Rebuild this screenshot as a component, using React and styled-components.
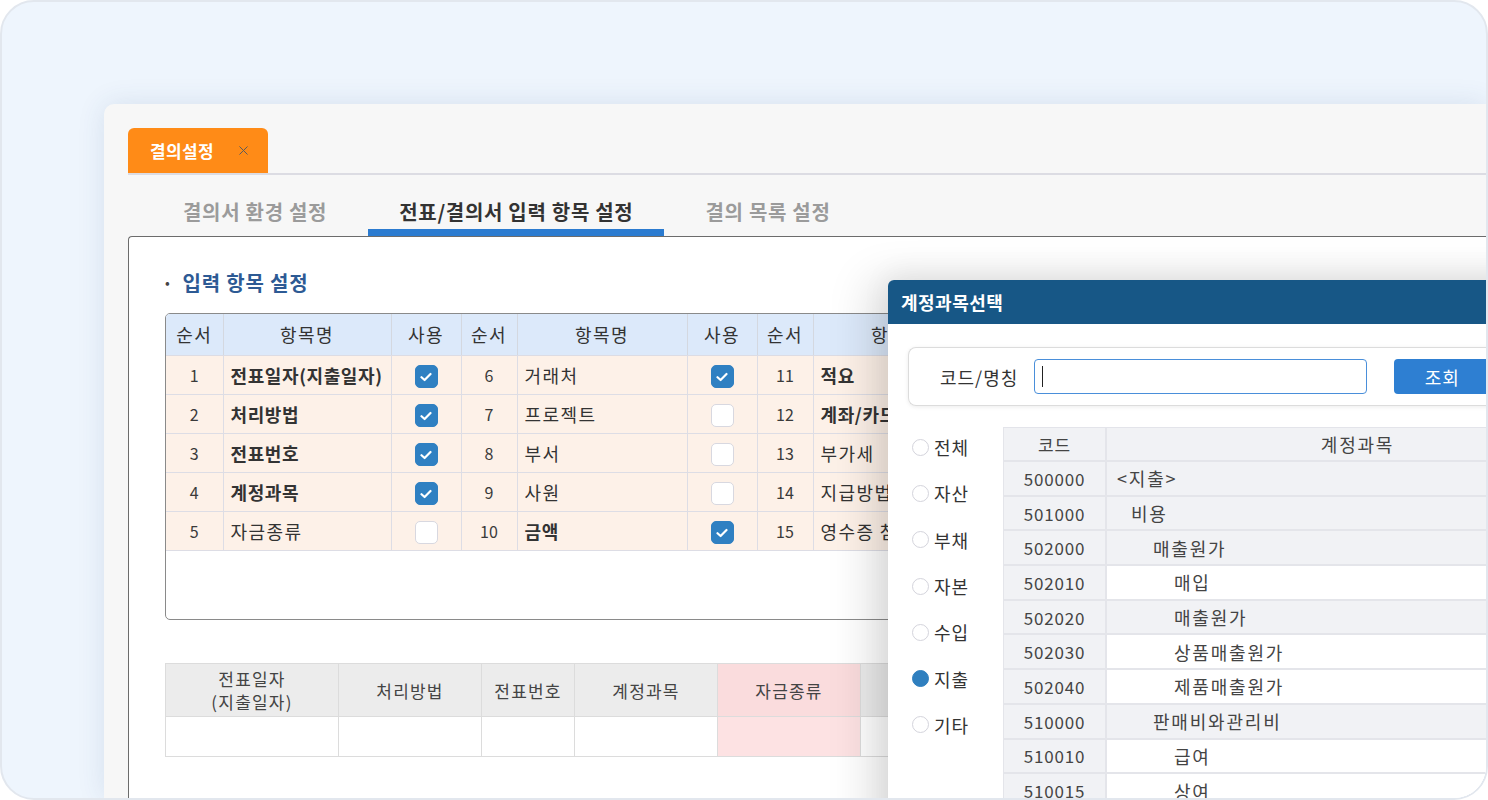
import React from "react";
import styled, { createGlobalStyle } from "styled-components";
import { X } from "lucide-react";

const GlobalStyle = createGlobalStyle`
  html, body {
    margin: 0;
    padding: 0;
    background: #ffffff;
  }
  body {
    font-family: "Noto Sans CJK KR", "Noto Sans", sans-serif;
    color: #333;
  }
  * {
    box-sizing: border-box;
  }
`;

const topItems = [
  [
    { no: 1, name: "전표일자(지출일자)", bold: true, on: true },
    { no: 2, name: "처리방법", bold: true, on: true },
    { no: 3, name: "전표번호", bold: true, on: true },
    { no: 4, name: "계정과목", bold: true, on: true },
    { no: 5, name: "자금종류", bold: false, on: false },
  ],
  [
    { no: 6, name: "거래처", bold: false, on: true },
    { no: 7, name: "프로젝트", bold: false, on: false },
    { no: 8, name: "부서", bold: false, on: false },
    { no: 9, name: "사원", bold: false, on: false },
    { no: 10, name: "금액", bold: true, on: true },
  ],
  [
    { no: 11, name: "적요", bold: true, on: true },
    { no: 12, name: "계좌/카드", bold: true, on: true },
    { no: 13, name: "부가세", bold: false, on: false },
    { no: 14, name: "지급방법", bold: false, on: false },
    { no: 15, name: "영수증 첨부", bold: false, on: false },
  ],
];

const bottomCols = [
  { label: ["전표일자", "(지출일자)"], w: 173 },
  { label: ["처리방법"], w: 143 },
  { label: ["전표번호"], w: 93 },
  { label: ["계정과목"], w: 143 },
  { label: ["자금종류"], w: 143, pink: true },
  { label: [""], w: 143 },
];

const radios = ["전체", "자산", "부채", "자본", "수입", "지출", "기타"];

// indent of the account name per tree level
const indents = [10, 24, 46, 67];

const accounts = [
  { code: "500000", name: "<지출>", level: 0, gray: true },
  { code: "501000", name: "비용", level: 1, gray: true },
  { code: "502000", name: "매출원가", level: 2, gray: true },
  { code: "502010", name: "매입", level: 3, gray: false },
  { code: "502020", name: "매출원가", level: 3, gray: true },
  { code: "502030", name: "상품매출원가", level: 3, gray: false },
  { code: "502040", name: "제품매출원가", level: 3, gray: false },
  { code: "510000", name: "판매비와관리비", level: 2, gray: true },
  { code: "510010", name: "급여", level: 3, gray: false },
  { code: "510015", name: "상여", level: 3, gray: false },
];

function CheckBox({ on }) {
  return (
    <Check $on={on}>
      {on && (
        <svg width="12" height="10" viewBox="0 0 12 10">
          <path
            d="M1.5 5.2 L4.6 8 L10.5 2"
            fill="none"
            stroke="#fff"
            strokeWidth="2.2"
            strokeLinecap="round"
            strokeLinejoin="round"
          />
        </svg>
      )}
    </Check>
  );
}

function App() {
  return (
    <>
      <GlobalStyle />
      <Frame>
        <AppWindow>
          <TabStrip>
            <OrangeTab>
              결의설정
              <X size={15} strokeWidth={1.6} color="#5b5b5b" />
            </OrangeTab>
          </TabStrip>

          <SubTabs>
            <SubTab>결의서 환경 설정</SubTab>
            <SubTab $active>전표/결의서 입력 항목 설정</SubTab>
            <SubTab>결의 목록 설정</SubTab>
          </SubTabs>

          <Panel>
            <SectionTitle>
              <Bullet>•</Bullet>
              입력 항목 설정
            </SectionTitle>

            <ItemBox>
              <ItemTable>
                <colgroup>
                  {[57, 168, 70, 56, 170, 70, 56, 170, 70].map((w, i) => (
                    <col key={i} style={{ width: w }} />
                  ))}
                </colgroup>
                <thead>
                  <tr>
                    {topItems.map((_, g) => (
                      <React.Fragment key={g}>
                        <HeadCell>순서</HeadCell>
                        <HeadCell>항목명</HeadCell>
                        <HeadCell>사용</HeadCell>
                      </React.Fragment>
                    ))}
                  </tr>
                </thead>
                <tbody>
                  {[0, 1, 2, 3, 4].map((r) => (
                    <tr key={r}>
                      {topItems.map((group, g) => {
                        const it = group[r];
                        return (
                          <React.Fragment key={g}>
                            <NumCell>{it.no}</NumCell>
                            <NameCell $bold={it.bold}>{it.name}</NameCell>
                            <UseCell>
                              <CheckBox on={it.on} />
                            </UseCell>
                          </React.Fragment>
                        );
                      })}
                    </tr>
                  ))}
                </tbody>
              </ItemTable>
            </ItemBox>

            <PreviewTable>
              <colgroup>
                {bottomCols.map((c, i) => (
                  <col key={i} style={{ width: c.w }} />
                ))}
              </colgroup>
              <thead>
                <tr>
                  {bottomCols.map((c, i) => (
                    <PreviewHead key={i} $pink={c.pink}>
                      {c.label.map((l, j) => (
                        <div key={j}>{l}</div>
                      ))}
                    </PreviewHead>
                  ))}
                </tr>
              </thead>
              <tbody>
                <tr>
                  {bottomCols.map((c, i) => (
                    <PreviewCell key={i} $pink={c.pink} />
                  ))}
                </tr>
              </tbody>
            </PreviewTable>
          </Panel>

          <Dialog>
            <DialogHeader>계정과목선택</DialogHeader>
            <DialogBody>
              <SearchBox>
                <SearchLabel>코드/명칭</SearchLabel>
                <SearchInput>
                  <Caret />
                </SearchInput>
                <SearchButton>조회</SearchButton>
              </SearchBox>

              <PickerRow>
                <RadioList>
                  {radios.map((r) => (
                    <RadioItem key={r}>
                      <RadioDot $on={r === "지출"} />
                      {r}
                    </RadioItem>
                  ))}
                </RadioList>

                <CodeTable>
                  <CodeRow $head>
                    <CodeCell $head>코드</CodeCell>
                    <AccountCell $head $gray>
                      계정과목
                    </AccountCell>
                  </CodeRow>
                  {accounts.map((a) => (
                    <CodeRow key={a.code}>
                      <CodeCell>{a.code}</CodeCell>
                      <AccountCell $gray={a.gray} $indent={indents[a.level]}>
                        {a.name}
                      </AccountCell>
                    </CodeRow>
                  ))}
                </CodeTable>
              </PickerRow>
            </DialogBody>
          </Dialog>
        </AppWindow>
      </Frame>
    </>
  );
}

export default App;

const Frame = styled.div`
  width: 1488px;
  height: 800px;
  border: 2px solid #e2e7ee;
  border-radius: 34px;
  background: #eef5fd;
  overflow: hidden;
  display: flex;
  padding: 102px 0 0 102px;
`;

const AppWindow = styled.div`
  position: relative;
  flex: 1;
  display: flex;
  flex-direction: column;
  background: #f7f7f7;
  border-top-left-radius: 10px;
  box-shadow: 0 0 28px rgba(40, 70, 120, 0.12);
  padding: 24px 0 0 24px;
`;

const TabStrip = styled.div`
  display: flex;
  height: 47px;
  border-bottom: 2px solid #dcdce3;
`;

const OrangeTab = styled.div`
  display: flex;
  align-items: center;
  gap: 22px;
  width: 140px;
  height: 45px;
  padding-left: 22px;
  background: #ff8b17;
  border-radius: 6px 6px 0 0;
  color: #fff;
  font-size: 17px;
  font-weight: 700;
  letter-spacing: 0.4px;
`;

const SubTabs = styled.div`
  display: flex;
  gap: 10px;
  padding: 20px 0 0 24px;
`;

const SubTab = styled.div`
  height: 41px;
  padding: 0 31px;
  line-height: 34px;
  font-size: 20px;
  font-weight: 700;
  letter-spacing: 0.7px;
  white-space: nowrap;
  color: ${(p) => (p.$active ? "#333" : "#9b9b9b")};
  border-bottom: 7px solid ${(p) => (p.$active ? "#2b7bd0" : "transparent")};
`;

const Panel = styled.div`
  flex: 1;
  background: #fff;
  border: 1px solid #6c6c6c;
  border-right: none;
  border-bottom: none;
  border-top-left-radius: 4px;
  padding: 29px 0 0 36px;
`;

const SectionTitle = styled.div`
  display: flex;
  align-items: center;
  gap: 12px;
  height: 32px;
  margin-bottom: 15px;
  font-size: 20px;
  font-weight: 700;
  letter-spacing: 0.8px;
  color: #2d5a94;
`;

const Bullet = styled.span`
  font-size: 14px;
  color: #444;
  font-weight: 400;
`;

const ItemBox = styled.div`
  width: 900px;
  height: 307px;
  border: 1px solid #8a8a8a;
  border-radius: 5px;
  overflow: hidden;
  background: #fff;
`;

const ItemTable = styled.table`
  border-collapse: collapse;
  table-layout: fixed;
  width: 887px;
  font-size: 18px;
  color: #333;
`;

const HeadCell = styled.th`
  height: 41px;
  padding: 0;
  background: #dce9fa;
  font-weight: 400;
  color: #333;
  letter-spacing: 1.4px;
  border-right: 1px solid #d4d8e0;
  border-bottom: 1px solid #dcdce4;
`;

const NumCell = styled.td`
  height: 39px;
  padding: 0;
  text-align: center;
  background: #fdf1e8;
  border: 1px solid #dddde5;
  border-left: none;
  font-size: 16px;
  color: #3a3a3a;
`;

const NameCell = styled.td`
  height: 39px;
  padding: 0 0 0 7px;
  background: #fdf1e8;
  border: 1px solid #dddde5;
  white-space: nowrap;
  overflow: hidden;
  font-weight: ${(p) => (p.$bold ? 700 : 400)};
  color: #333;
  letter-spacing: ${(p) => (p.$bold ? "0.6px" : "1.4px")};
`;

const UseCell = styled.td`
  height: 39px;
  padding: 0;
  text-align: center;
  background: #fdf1e8;
  border: 1px solid #dddde5;
`;

const Check = styled.span`
  display: inline-flex;
  align-items: center;
  justify-content: center;
  width: 23px;
  height: 23px;
  border-radius: 5px;
  vertical-align: middle;
  background: ${(p) => (p.$on ? "#2f80c2" : "#fff")};
  border: 1px solid ${(p) => (p.$on ? "#2f80c2" : "#d8d8e0")};
`;

const PreviewTable = styled.table`
  margin-top: 43px;
  border-collapse: collapse;
  table-layout: fixed;
  width: 838px;
`;

const PreviewHead = styled.th`
  height: 53px;
  padding: 0;
  font-size: 17px;
  font-weight: 400;
  line-height: 23px;
  letter-spacing: 1.2px;
  color: #444;
  background: ${(p) => (p.$pink ? "#fadcdd" : "#ececec")};
  border: 1px solid #dcdcdc;
`;

const PreviewCell = styled.td`
  height: 40px;
  padding: 0;
  background: ${(p) => (p.$pink ? "#fde2e3" : "#fff")};
  border: 1px solid #dcdcdc;
`;

const Dialog = styled.div`
  position: absolute;
  left: 784px;
  top: 176px;
  width: 720px;
  height: 640px;
  background: #fff;
  border-top-left-radius: 6px;
  box-shadow: -18px 0 44px rgba(0, 0, 0, 0.13), 0 -6px 30px rgba(0, 0, 0, 0.06);
`;

const DialogHeader = styled.div`
  display: flex;
  align-items: center;
  height: 44px;
  padding-left: 13px;
  background: #175786;
  border-top-left-radius: 6px;
  color: #fff;
  font-size: 18px;
  font-weight: 700;
  letter-spacing: 0.5px;
`;

const DialogBody = styled.div`
  padding: 23px 0 0 20px;
`;

const SearchBox = styled.div`
  display: flex;
  align-items: center;
  height: 59px;
  padding-left: 31px;
  border: 1px solid #dcdcdc;
  border-right: none;
  border-radius: 8px 0 0 8px;
  box-shadow: 0 1px 4px rgba(0, 0, 0, 0.08);
`;

const SearchLabel = styled.span`
  font-size: 18px;
  color: #333;
  letter-spacing: 1px;
`;

const SearchInput = styled.div`
  display: flex;
  align-items: center;
  width: 333px;
  height: 35px;
  margin-left: 16px;
  padding-left: 7px;
  border: 1.5px solid #4a8fda;
  border-radius: 4px;
`;

const Caret = styled.span`
  width: 1px;
  height: 21px;
  background: #222;
`;

const SearchButton = styled.div`
  display: flex;
  align-items: center;
  justify-content: center;
  width: 96px;
  height: 35px;
  margin-left: 27px;
  border-radius: 4px;
  background: #2e7fd2;
  color: #fff;
  font-size: 18px;
  letter-spacing: 1px;
`;

const PickerRow = styled.div`
  display: flex;
  margin-top: 21px;
`;

const RadioList = styled.div`
  display: flex;
  flex-direction: column;
  width: 95px;
  padding-left: 4px;
  margin-top: -3px;
`;

const RadioItem = styled.div`
  display: flex;
  align-items: center;
  gap: 5px;
  height: 46.3px;
  font-size: 18px;
  letter-spacing: 1px;
  color: #333;
`;

const RadioDot = styled.span`
  width: 17px;
  height: 17px;
  border-radius: 50%;
  background: ${(p) => (p.$on ? "#2f7fbf" : "#fff")};
  border: 1px solid ${(p) => (p.$on ? "#2f7fbf" : "#d4d4dc")};
`;

const CodeTable = styled.div`
  flex: 1;
  border-top: 1px solid #e3e4ea;
`;

const CodeRow = styled.div`
  display: grid;
  grid-template-columns: 104px 1fr;
  height: ${(p) => (p.$head ? "34px" : "34.7px")};
  border-bottom: 2px solid #e4e5ea;
`;

const CodeCell = styled.div`
  display: flex;
  align-items: center;
  justify-content: center;
  background: #f1f2f5;
  border-right: 2px solid #e4e5ea;
  border-left: 1px solid #e4e5ea;
  font-size: 17px;
  letter-spacing: 0.8px;
  color: #444;
`;

const AccountCell = styled.div`
  display: flex;
  align-items: center;
  justify-content: ${(p) => (p.$head ? "center" : "flex-start")};
  padding-left: ${(p) => (p.$head ? 0 : p.$indent)}px;
  background: ${(p) => (p.$gray ? "#f1f2f5" : "#fff")};
  font-size: 18px;
  color: #444;
  letter-spacing: 1.8px;
  white-space: nowrap;
`;
